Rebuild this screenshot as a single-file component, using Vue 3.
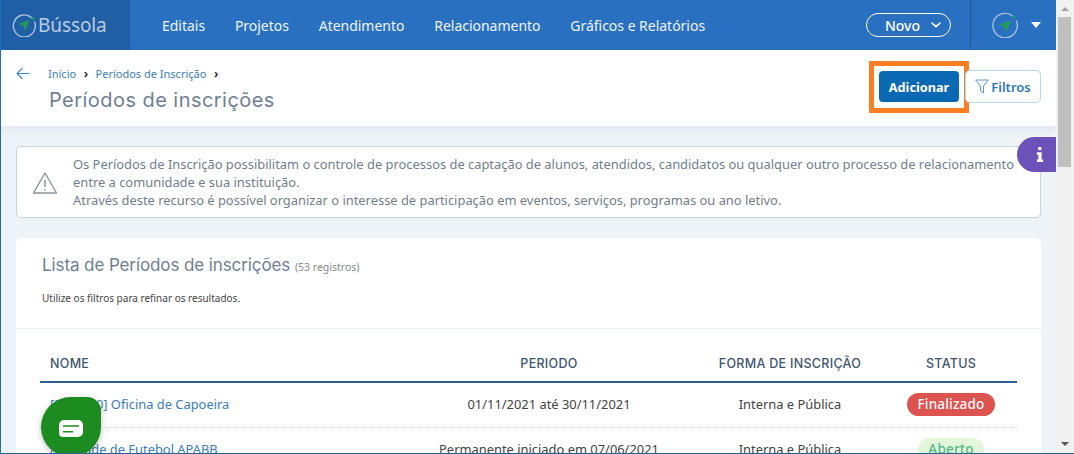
<script setup>
const navItems = ['Editais', 'Projetos', 'Atendimento', 'Relacionamento', 'Gráficos e Relatórios']
const rows = [
  { nome: '[2021/10] Oficina de Capoeira', periodo: '01/11/2021 até 30/11/2021', forma: 'Interna e Pública', status: 'Finalizado', cls: 'red' },
  { nome: 'Atividade de Futebol APABB', periodo: 'Permanente iniciado em 07/06/2021', forma: 'Interna e Pública', status: 'Aberto', cls: 'green' }
]
</script>

<template>
  <div class="window">
    <div class="main">
      <header class="topbar">
        <div class="brand">
          <svg class="compass" width="24" height="24" viewBox="0 0 24 24" fill="none">
            <path d="M19.500 4.600A11 11 0 1 0 22.600 9" stroke="#a9c4e2" stroke-width="1.400" stroke-linecap="round"/>
            <path d="M17.500 7 6 11l5.500 1.500L13 18z" fill="#1f9d57"/>
            <circle cx="21" cy="5.500" r="1.500" fill="#1f9d57"/>
          </svg>
          <span class="brand-name">Bússola</span>
        </div>
        <nav class="nav">
          <a v-for="item in navItems" :key="item" class="nav-item">{{ item }}</a>
        </nav>
        <div class="top-right">
          <button class="novo">Novo
            <svg width="10" height="6" viewBox="0 0 10 6" fill="none"><path d="M1 1l4 3.600L9 1" stroke="#fff" stroke-width="1.600" stroke-linecap="round" stroke-linejoin="round"/></svg>
          </button>
          <div class="account">
            <svg width="26" height="26" viewBox="0 0 26 26" fill="none">
              <path d="M20.500 3.900A12.200 12.200 0 1 0 24.400 9" stroke="#a9c4e2" stroke-width="1.300" stroke-linecap="round"/>
              <path d="M19 8.500 6 13l6 1 2 6.500z" fill="#1f9d57"/>
              <circle cx="22" cy="5" r="1.500" fill="#1f9d57"/>
            </svg>
            <span class="caret"></span>
          </div>
        </div>
      </header>

      <section class="pagehead">
        <svg class="back" width="14" height="13" viewBox="0 0 14 13" fill="none"><path d="M6.500 1 1 6.500 6.500 12M1 6.500h12.500" stroke="#3f87c9" stroke-width="1.100"/></svg>
        <div class="head-text">
          <div class="crumbs">
            <span>Início</span><b>›</b><span>Períodos de Inscrição</span><b>›</b>
          </div>
          <h1>Períodos de inscrições</h1>
        </div>
        <div class="actions">
          <div class="highlight"><button class="add">Adicionar</button></div>
          <button class="filter">
            <svg width="14" height="15" viewBox="0 0 14 15" fill="none"><path d="M.7 1h12.600L8.500 7v7L5.500 12V7z" stroke="#5c9ad3" stroke-width="1" stroke-linejoin="round"/></svg>
            Filtros
          </button>
        </div>
      </section>

      <div class="content">
        <div class="alert">
          <svg class="warn" width="26" height="24" viewBox="0 0 26 24" fill="none">
            <path d="M13 2 1.500 22h23z" stroke="#8a949e" stroke-width="1.400" stroke-linejoin="round"/>
            <path d="M13 9v7" stroke="#8a949e" stroke-width="1.500"/>
            <circle cx="13" cy="18.800" r=".9" fill="#8a949e"/>
          </svg>
          <p>Os Períodos de Inscrição possibilitam o controle de processos de captação de alunos, atendidos, candidatos ou qualquer outro processo de relacionamento entre a comunidade e sua instituição.<br>Através deste recurso é possível organizar o interesse de participação em eventos, serviços, programas ou ano letivo.</p>
        </div>

        <div class="card">
          <div class="card-head">
            <h2>Lista de Períodos de inscrições <small>(53 registros)</small></h2>
            <p>Utilize os filtros para refinar os resultados.</p>
          </div>
          <div class="table">
            <div class="tr th">
              <div class="c1">NOME</div><div>PERIODO</div><div>FORMA DE INSCRIÇÃO</div><div>STATUS</div>
            </div>
            <div v-for="r in rows" :key="r.nome" class="tr td">
              <div class="c1 link">{{ r.nome }}</div>
              <div>{{ r.periodo }}</div>
              <div>{{ r.forma }}</div>
              <div><span class="badge" :class="r.cls">{{ r.status }}</span></div>
            </div>
          </div>
        </div>
      </div>

      <div class="info">
        <svg width="8" height="15" viewBox="0 0 7 14"><path d="M1.800 0h3v2.800h-3zM.6 5h4.400v6.600h1.400V14H.6v-2.400H2V7.400H.6z" fill="#fff"/></svg>
      </div>
      <div class="chat">
        <svg width="24" height="17" viewBox="0 0 24 17"><path d="M5 0h14a5 5 0 0 1 5 5v7a5 5 0 0 1-5 5c-5 .5-11 .5-15 0a4 4 0 0 1-4-4V5a5 5 0 0 1 5-5z" fill="#fff"/><path d="M4 6h16M4 11.700h10" stroke="#1d8c20" stroke-width="1.600"/></svg>
      </div>
    </div>

    <aside class="scrollbar">
      <span class="arrow up"></span>
      <span class="thumb"></span>
      <span class="arrow down"></span>
    </aside>
  </div>
</template>

<style>
html, body { margin: 0; background: #fff; overflow: hidden; }
</style>

<style scoped>
* { box-sizing: border-box; }
.window {
  width: 1074px; height: 454px; display: flex; overflow: hidden;
  border-left: 1px solid #1d70b8; border-bottom: 1px solid #2a6496;
  font-family: "Noto Sans", "Open Sans", sans-serif;
}
.main { position: relative; width: 1055px; height: 453px; overflow: hidden; background: #eef3f7; flex: none; }

.topbar { height: 50px; background: #2a70c0; display: flex; align-items: center; color: #fff; }
.brand { width: 129px; height: 50px; background: #205ea6; display: flex; align-items: center; padding-left: 11px; gap: 2px; flex: none; }
.brand-name { font-size: 19px; color: #b9cde4; letter-spacing: -.1px; }
.nav { display: flex; gap: 29.800px; margin-left: 32px; }
.nav-item { font-size: 14px; color: #eef4fb; letter-spacing: -.02px; }
.top-right { margin-left: auto; display: flex; align-items: center; height: 50px; }
.novo {
  width: 85px; height: 24px; border: 1px solid #fff; border-radius: 12px; background: transparent; color: #fff;
  font: 500 14px "Noto Sans", sans-serif; display: flex; align-items: center; justify-content: center; gap: 11px; padding: 0 0 0 9px;
}
.account { margin-left: 19px; height: 50px; width: 86px; border-left: 1px solid #1f5590; display: flex; align-items: center; padding-left: 21px; gap: 13px; }
.caret { width: 0; height: 0; border-left: 5.500px solid transparent; border-right: 5.500px solid transparent; border-top: 6px solid #fff; }

.pagehead { position: relative; height: 76px; background: #fff; box-shadow: 0 2px 8px rgba(90,120,150,.12); display: flex; }
.back { margin: 17px 0 0 15px; flex: none; }
.head-text { margin-left: 18px; padding-top: 16px; }
.crumbs { font-size: 11px; line-height: 16px; color: #3c7dbd; display: flex; gap: 7.500px; align-items: center; }
.crumbs b { color: #333; font-size: 12px; }
h1 { margin: 5px 0 0 1px; font: 400 20px/26px Inter, sans-serif; color: #6f7f93; letter-spacing: .45px; }
.actions { margin-left: auto; margin-right: 15px; display: flex; align-items: center; margin-top: -3px; gap: 0; }
.highlight { width: 100px; height: 52px; border: 5px solid #fb7d24; padding: 5px; display: flex; align-items: center; justify-content: center; }
.add { width: 80px; height: 31px; border: 0; border-radius: 4px; background: #0b69b3; color: #fff; font: 700 12.700px "Noto Sans", sans-serif; padding: 0; }
.filter {
  width: 76px; height: 33px; margin-left: -4px; border: 1px solid #b9d7ee; border-radius: 5px; background: #fff; color: #2f78b8;
  font: 600 13px "Noto Sans", sans-serif; display: flex; align-items: center; justify-content: center; gap: 2px; padding: 0;
}

.content { padding: 20px 15px 0 15px; }
.alert { height: 72px; background: #fff; border: 1px solid #c6d3e2; border-radius: 5px; display: flex; align-items: center; padding: 0 6px 0 15px; }
.warn { flex: none; margin-right: 15px; margin-top: 1px; }
.alert p { margin: 0; font-size: 12.900px; line-height: 18px; color: #6f7f8f; }
.card { margin-top: 20px; background: #fff; border-radius: 5px; height: 300px; }
.card-head { height: 91px; border-bottom: 1px solid #e9eff4; padding: 15px 26px 0; }
h2 { margin: 0; font: 400 17px/24px Inter, sans-serif; color: #6f7f93; letter-spacing: -.1px; }
h2 small { font: 400 10.500px "Noto Sans", sans-serif; color: #888; letter-spacing: 0; }
.card-head p { margin: 13px 0 0; font-size: 10px; line-height: 16px; color: #444; }

.table { margin: 0 24px; }
.tr { display: grid; grid-template-columns: 363px 292px 190px 132px; text-align: center; align-items: center; }
.c1 { text-align: left; padding-left: 10px; }
.th { height: 54px; padding-top: 16px; border-bottom: 2px solid #2f5f8f; font: 500 12.500px Inter, sans-serif; color: #3d5570; letter-spacing: .3px; }
.td { height: 45px; padding-bottom: 2px; border-bottom: 1px dotted #d8d8d8; font-size: 12.900px; color: #444; }
.link { color: #3c7dbd; }
.badge { display: inline-block; height: 23px; line-height: 23px; border-radius: 11.500px; padding: 0 10px; font-size: 13.500px; font-weight: 500; letter-spacing: .2px; }
.red { background: #dc5350; color: #fff; }
.green { background: #e4f6da; color: #4fb98c; }

.info { position: absolute; left: 1016px; top: 137px; width: 39px; height: 35px; background: #6a52b9; border-radius: 18px 0 0 18px; display: flex; align-items: center; justify-content: center; padding-left: 6px; }
.chat { position: absolute; left: 40px; top: 397px; width: 60px; height: 60px; background: #1d8c20; border-radius: 50% 14px 50% 50%; display: flex; align-items: center; justify-content: center; box-shadow: 0 2px 6px rgba(0,0,0,.25); padding-top: 2px; }

.scrollbar { position: relative; width: 18px; height: 453px; background: #f1f1f1; flex: none; }
.thumb { position: absolute; left: 2px; top: 17px; width: 13px; height: 150px; background: #c0c0c0; }
.arrow { position: absolute; left: 5px; width: 0; height: 0; border-left: 4px solid transparent; border-right: 4px solid transparent; }
.up { top: 7px; border-bottom: 4px solid #a3a3a3; }
.down { bottom: 7px; border-top: 4px solid #555; }
</style>
